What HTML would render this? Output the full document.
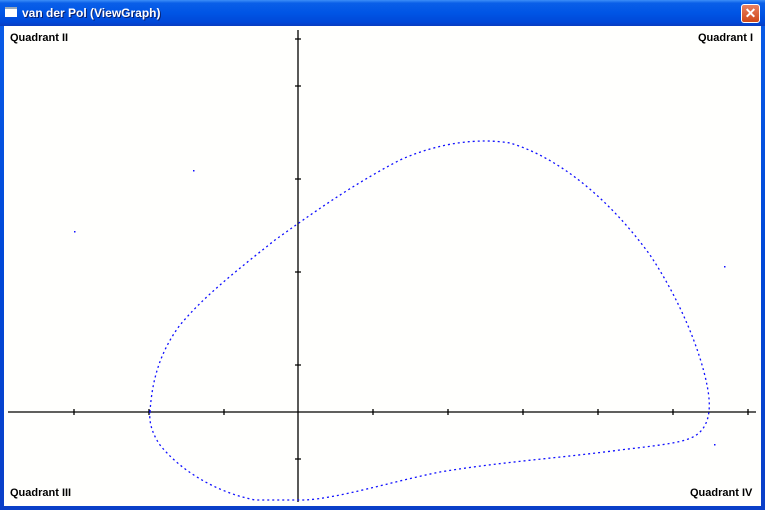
<!DOCTYPE html>
<html><head><style>
html,body{margin:0;padding:0;width:765px;height:510px;overflow:hidden;background:#0a46d8;}
.win{position:absolute;left:0;top:0;width:765px;height:510px;background:linear-gradient(#0a5de8,#0048d8 50%,#0a3fc8);}
.title{position:absolute;left:0;top:0;width:765px;height:26px;background:linear-gradient(#3d8ef8 0%,#0a5fe8 12%,#0055e5 50%,#0048d8 85%,#0a3cc0 100%);}
.title span{position:absolute;left:22px;top:6px;color:#fff;font:bold 12px "Liberation Sans",sans-serif;text-shadow:1px 1px #0a1f6a;}
.ico{position:absolute;left:5px;top:7px;width:12px;height:10px;background:#fff;border-top:2px solid #9ab;box-sizing:border-box;}
.close{position:absolute;left:741px;top:4px;width:19px;height:19px;border:1px solid #fff;border-radius:3px;background:linear-gradient(#e88060,#d04818);box-sizing:border-box;color:#fff;font:bold 14px "Liberation Sans",sans-serif;text-align:center;line-height:17px;}
.content{position:absolute;left:4px;top:26px;width:757px;height:480px;background:#fffffd;}
.lbl{position:absolute;font:bold 11px "Liberation Sans",sans-serif;color:#000;}
</style></head><body>
<div class="win">
<div class="title"><div class="ico"></div><span>van der Pol (ViewGraph)</span><div class="close">✕</div></div>
<div class="content"></div>
<svg style="position:absolute;left:0;top:0" width="765" height="510">
<g stroke="#000" stroke-width="1.3" fill="none">
<line x1="8" y1="412" x2="756" y2="412"/>
<line x1="298" y1="30" x2="298" y2="502"/>
<path d="M74 409v6M149 409v6M224 409v6M373 409v6M448 409v6M523 409v6M598 409v6M673 409v6M748 409v6M295 39h6M295 86h6M295 179h6M295 272h6M295 365h6M295 459h6"/>
</g>
<path d="M150 412 C152 380 160 352 180 325 C205 295 240 268 275 240 C310 215 350 186 400 160 C440 142 480 138 510 143 C560 158 610 200 650 255 C680 300 700 350 707 385 C710 400 712 420 700 432 C690 442 670 444 620 450 C560 458 500 462 440 472 C390 482 340 498 305 500 L255 500 C215 492 180 470 160 445 C151 432 149 420 150 412 Z" fill="none" stroke="#1010ff" stroke-width="1.3" stroke-dasharray="2 3"/>
<g fill="#1010ff"><rect x="193" y="170" width="1.5" height="1.5"/><rect x="74" y="231" width="1.5" height="1.5"/><rect x="724" y="266" width="1.5" height="1.5"/><rect x="714" y="444" width="1.5" height="1.5"/></g>
</svg>
<div class="lbl" style="left:10px;top:32px">Quadrant II</div>
<div class="lbl" style="left:698px;top:32px">Quadrant I</div>
<div class="lbl" style="left:10px;top:487px">Quadrant III</div>
<div class="lbl" style="left:690px;top:487px">Quadrant IV</div>
</div>
</body></html>
